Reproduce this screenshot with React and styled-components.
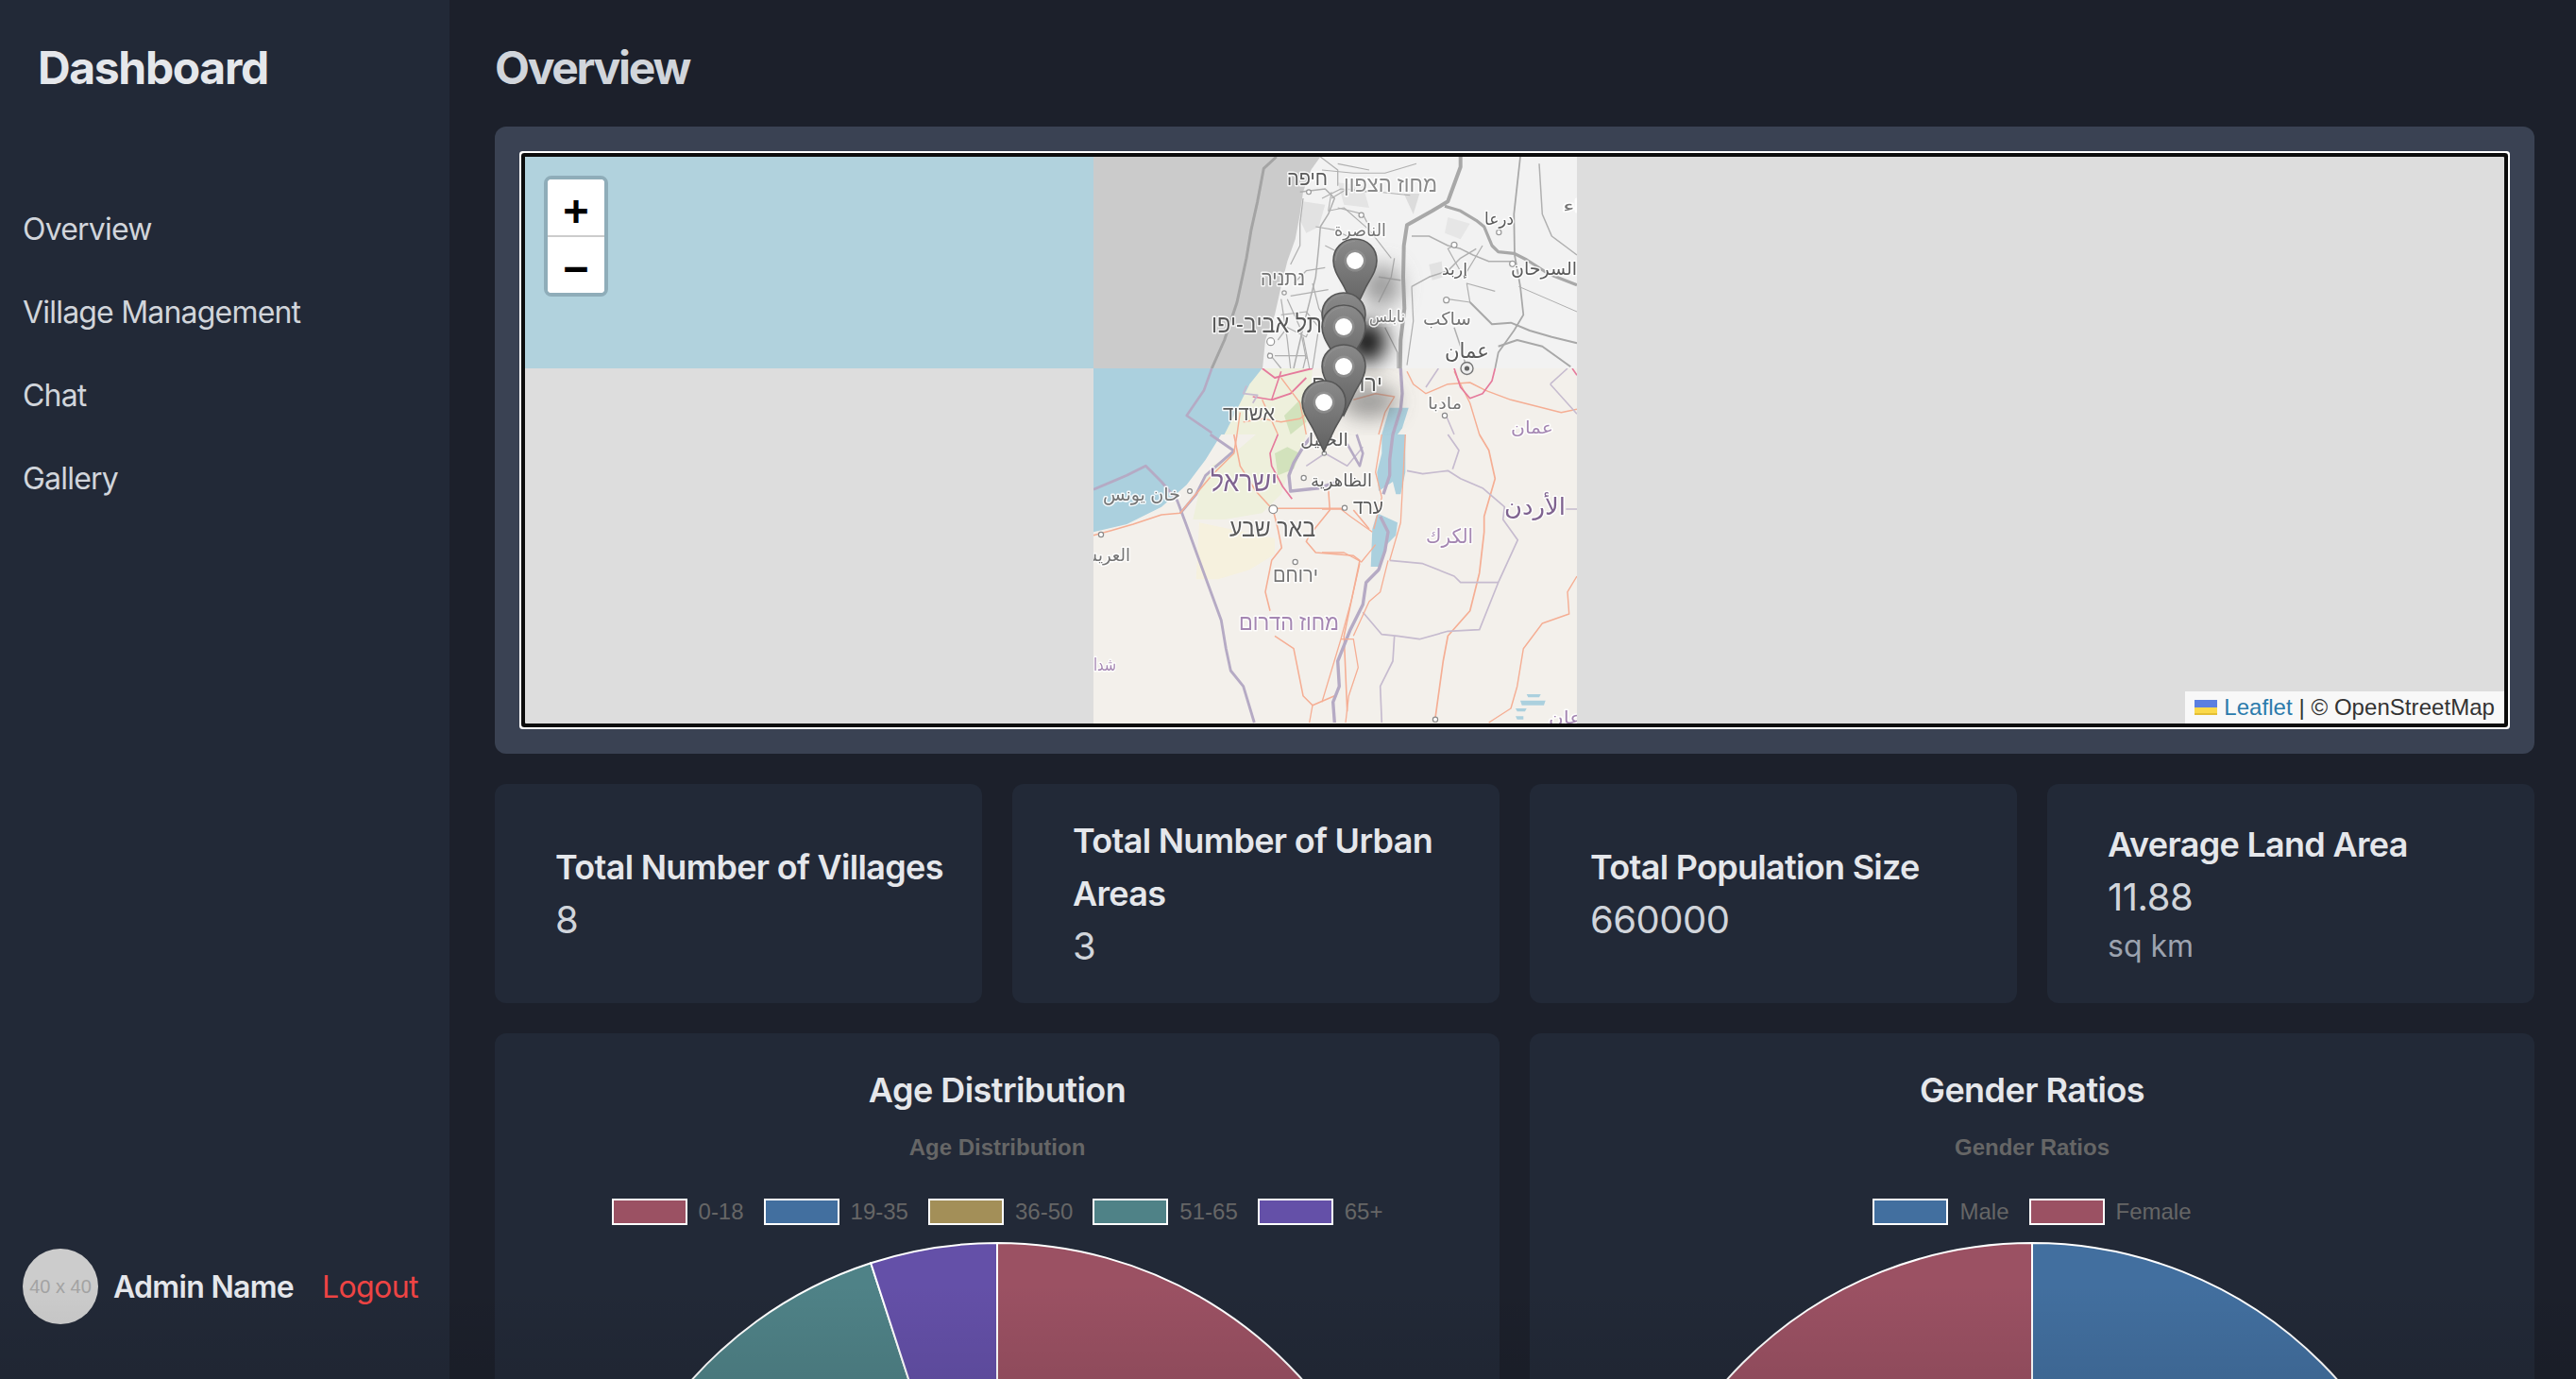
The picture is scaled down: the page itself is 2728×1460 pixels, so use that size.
import React from 'react';
import styled, { createGlobalStyle } from 'styled-components';

const Global = createGlobalStyle`
  html, body { margin: 0; padding: 0; height: 100%; overflow: hidden; background: #1c202b; }
  * { box-sizing: border-box; }
  body { font-family: Inter, "Noto Sans", sans-serif; }
`;

const Shell = styled.div`display: flex; width: 2728px; height: 1460px; overflow: hidden; position: relative;`;
const Sidebar = styled.aside`
  width: 476px; flex: none; background: #222937; display: flex; flex-direction: column; padding: 0 24px 58px;
`;
const Brand = styled.h1`margin: 40px 0 0 16px; font-size: 48px; line-height: 64px; font-weight: 700; letter-spacing: -1.35px; color: #e5e7eb;`;
const Nav = styled.nav`margin-top: 115px; display: flex; flex-direction: column; gap: 40px; flex: 1;`;
const NavItem = styled.a`font-size: 32px; line-height: 48px; letter-spacing: -.8px; color: #d1d5db;`;
const UserRow = styled.div`display: flex; align-items: center; white-space: nowrap;`;
const Avatar = styled.div`
  width: 80px; height: 80px; flex: none; border-radius: 50%; background: #ccc; color: #a3a3a3;
  display: flex; align-items: center; justify-content: center;
  font: 20px "Liberation Sans", sans-serif;
`;
const UserName = styled.span`margin-left: 16px; font-size: 32px; font-weight: 600; letter-spacing: -.7px; color: #e5e7eb;`;
const Logout = styled.a`margin-left: 30px; font-size: 32px; letter-spacing: -.6px; color: #ef4444;`;

const Main = styled.main`flex: 1; padding: 40px 44px 0 48px; min-width: 0; background: #1c202b;`;
const PageTitle = styled.h2`margin: 0 0 30px; font-size: 48px; line-height: 64px; font-weight: 700; letter-spacing: -2.3px; color: #d1d5db;`;
const MapPanel = styled.section`background: #3a4253; border-radius: 12px; padding: 32px;`;
const MapFrame = styled.div`
  position: relative; height: 600px; background: #ddd; border-radius: 1px;
  box-shadow: 0 0 0 4px #0c0c0c, 0 0 0 6px #fff;
`;
const MapArt = styled.svg`display: block; width: 100%; height: 100%;`;
const ZoomBox = styled.div`
  position: absolute; left: 20px; top: 20px; width: 68px; border: 4px solid #8fadb9; border-radius: 8px;
  background: #fff; overflow: hidden;
`;
const ZoomBtn = styled.div`
  height: ${p => p.$h}px; padding-top: 5px; display: flex; align-items: center; justify-content: center; background: #fff; color: #000;
  font: bold 44px "DejaVu Sans Mono", "Liberation Mono", monospace;
  border-bottom: ${p => (p.$sep ? '2px solid #ccc' : 'none')};
`;
const Attribution = styled.div`
  position: absolute; right: 0; bottom: 0; height: 34px; padding: 0 10px; display: flex; align-items: center;
  background: rgba(255,255,255,.8); color: #333; white-space: pre; letter-spacing: .05px;
  font: 24px/34px "Liberation Sans", Arial, sans-serif;
`;
const AttrLink = styled.a`color: #2b7bac;`;
const Flag = styled.svg`width: 24px; height: 16px; margin-right: 7px; flex: none;`;

const Stats = styled.div`display: grid; grid-template-columns: repeat(4, 1fr); gap: 32px; margin-top: 32px;`;
const StatCard = styled.div`
  height: 232px; background: #222937; border-radius: 12px; padding: 32px 32px 32px 64px;
  display: flex; flex-direction: column; justify-content: center;
`;
const StatLabel = styled.div`font-size: 36px; line-height: 56px; font-weight: 600; letter-spacing: -.7px; color: #e5e7eb;`;
const StatValue = styled.div`font-size: 40px; line-height: 56px; letter-spacing: -.5px; color: #d1d5db;`;
const StatUnit = styled.div`font-size: 32px; line-height: 48px; color: #9ca3af;`;

const Charts = styled.div`display: grid; grid-template-columns: repeat(2, 1fr); gap: 32px; margin-top: 32px;`;
const ChartCard = styled.div`background: #222937; border-radius: 12px; padding: 32px; height: 1120px;`;
const ChartHeading = styled.div`font-size: 36px; line-height: 56px; font-weight: 600; letter-spacing: -.55px; color: #e5e7eb; text-align: center;`;
const CanvasTitle = styled.div`margin-top: 16px; font: bold 24px/34px "Liberation Sans", Arial, sans-serif; color: #666; text-align: center;`;
const Legend = styled.div`margin-top: 37px; display: flex; justify-content: center; gap: 21px;`;
const LegendItem = styled.div`display: flex; align-items: center; gap: 12px; font: 24px/28px "Liberation Sans", Arial, sans-serif; color: #666;`;
const Swatch = styled.span`width: 80px; height: 28px; border: 2px solid #fff; background: ${p => p.$c};`;
const PieBox = styled.svg`display: block; margin: 17px auto 0; width: 870px; height: 870px;`;
const BottomFade = styled.div`
  position: absolute; left: 0; right: 0; bottom: 0; height: 100px; pointer-events: none;
  background: linear-gradient(rgba(0,0,0,0), rgba(0,0,0,.08));
`;

const Z = { a: [1150, 160], b: [1400, 160], c: [1150, 460], d: [1400, 460] };
const P = (z, s) => s.trim().split(/\s+/).map(p => {
  const [x, y] = p.split(',').map(Number);
  return `${(Z[z][0] + x / 3).toFixed(1)},${(Z[z][1] + y / 3).toFixed(1)}`;
}).join(' ');

const GG = '#b0b0b0', GD = '#a8a8a8';
const greyLines = [
  ['a', '#a4a4a4', 2.4, '605,18 565,55 545,160 525,250 510,340 480,480 440,600 400,690'],
  ['a', GG, 1.2, '680,130 760,120 790,150 770,200 745,240 740,300 730,400 710,480 690,560 660,690'],
  ['a', GG, 1, '650,360 680,300 680,230 690,150'],
  ['a', GG, 1, '800,180 880,200 900,240'],
  ['a', GG, 1, '730,240 790,250 850,280'],
  ['a', GG, 1, '620,470 640,600 650,690'],
  ['a', GG, 1, '650,460 770,440'],
  ['a', GG, 1, '610,600 640,560 700,590 720,540'],
  ['a', GG, 1, '600,650 700,650 690,690'],
  ['a', GG, 1, '720,420 740,500 760,530'],
  ['a', GG, 1, '690,590 710,690'],
  ['a', GG, 1, '745,18 800,60 800,110'],
  ['a', GG, 1, '800,40 900,60'],
  ['a', GG, 1, '620,520 700,510 740,560 720,690'],
  ['a', GG, 1, '580,640 620,690'],
  ['a', GG, 1, '780,150 830,120 900,130'],
  ['a', GG, 1, '660,420 700,380 760,370'],
  ['a', GG, 1, '640,470 680,560 700,660'],
  ['a', GG, 1, '760,300 800,320 830,300'],
  ['b', GD, 3.2, '440,18 440,50 400,160 350,190 270,235 260,300 258,400 262,500 250,600 248,690'],
  ['b', GD, 2.6, '390,175 440,190 490,220 515,240 540,300 560,320 610,325 650,345 720,390 810,425'],
  ['b', GD, 1.4, '630,18 610,200 612,330 630,430 640,520 610,570 560,640 550,690'],
  ['b', GG, 1.2, '690,40 700,200 730,270 770,300 810,330'],
  ['b', GG, 1.2, '285,270 340,270 400,300 440,310 480,330 530,350 600,350'],
  ['b', GG, 1.2, '285,430 340,400 400,380 440,340 490,310'],
  ['b', GG, 1, '285,430 290,540 270,680'],
  ['b', GD, 1.6, '470,480 540,550 600,545 660,570 730,590 810,610'],
  ['b', GD, 1.6, '560,620 620,600 700,620 790,685'],
  ['b', GG, .8, '625,430 810,510'],
  ['b', GG, 1, '420,300 400,310 450,400 510,300'],
  ['b', GG, 1.2, '420,560 440,620 460,690'],
  ['b', GG, 1, '400,470 470,480 460,420 550,445'],
  ['b', GG, .9, '0,60 100,70 200,70 300,40'],
  ['b', GG, .9, '0,150 60,120 180,130 280,140'],
  ['b', GG, .9, '30,130 20,190 70,180 150,250 220,340'],
  ['b', GG, 1.2, '180,400 250,410'],
  ['b', GG, 1, '230,340 220,400 180,480'],
  ['b', GG, 1, '200,560 240,640 240,690'],
];
const colorBorder = '#b5aac4', thinP = '#c6bbcf', road = '#f5ae94', pink = '#e57a9c';
const colorLines = [
  ['a', colorBorder, 2, '400,690 375,760 320,840 400,895'],
  ['a', pink, 1.4, '560,690 600,720 640,710 720,690'],
  ['a', pink, 1.4, '590,790 650,770 700,720'],
  ['a', pink, 1.2, '530,780 590,790 620,700'],
  ['a', road, 1.1, '500,860 560,850 620,860 680,850 720,820'],
  ['a', road, 1.1, '490,830 480,900'],
  ['a', road, 1.1, '560,790 610,900'],
  ['a', thinP, 1.4, '510,745 500,770 545,775 530,800'],
  ['a', road, 1, '620,720 680,800 700,900'],
  ['c', colorBorder, 2.2, '395,0 470,52 380,130 350,190 300,250'],
  ['c', colorBorder, 2.2, '24,175 130,130 190,100 240,150 290,210 320,290 360,400 430,590 445,680 460,750 500,800 535,915'],
  ['c', road, 1.2, '24,320 80,305 150,285 240,255 300,250 340,200 400,130 470,60 480,0'],
  ['c', road, 1.2, '595,240 540,180 490,100 470,0'],
  ['c', pink, 1.3, '655,205 625,165 590,100 585,60 610,0'],
  ['c', road, 1.2, '595,240 610,300 622,360 590,400 570,500 585,560'],
  ['c', road, 1.2, '600,640 660,680 690,830 720,860 790,830'],
  ['c', road, 1.2, '600,235 700,235 820,235'],
  ['c', road, 1.2, '850,240 900,300'],
  ['c', road, 1.2, '770,170 775,240 710,320 700,340 730,375 850,385 870,400 820,640 830,880'],
  ['c', road, 1, '720,860 710,915'],
  ['c', colorBorder, 2.6, '720,0 690,40 660,90 645,130 650,180 740,170 800,150'],
  ['c', thinP, 1.2, '700,100 760,60 830,100 880,40'],
  ['c', colorBorder, 2, '860,0 880,60 870,100 830,30'],
  ['d', colorBorder, 2.6, '225,0 215,80 215,130 195,190'],
  ['d', colorBorder, 2.6, '185,260 210,310 200,370 180,430 140,470 130,540 90,620 50,720 55,800 35,850 40,915'],
  ['d', road, 1.3, '500,0 530,50 550,140 515,260 515,310 500,440 470,560 400,640 385,720 360,900'],
  ['d', thinP, 1.3, '270,115 320,125 400,115 440,140 510,170 580,230 575,270 622,335 560,470 500,620 400,625 310,650 240,640 190,635 130,565'],
  ['d', thinP, 1.3, '215,400 320,410 420,450 440,470 560,470'],
  ['d', thinP, 1.3, '230,640 225,720 185,800 190,915'],
  ['d', thinP, 1.3, '415,110 435,50 400,0'],
  ['d', thinP, 1.2, '775,237 810,237'],
  ['d', road, 1.1, '810,450 780,500 785,570 700,600 640,680 620,800 600,870 530,915'],
  ['d', road, 1, '60,650 100,650 115,740 85,830 75,915'],
  ['d', road, 1, '120,410 95,520 60,650 0,850'],
  ['d', road, 1, '210,400 185,500 150,530 100,640'],
  ['d', road, 1, '0,375 70,375 125,405 170,350'],
  ['d', road, 1, '265,0 250,280 215,400'],
  ['d', road, 1, '0,237 60,237 90,260 160,310'],
  ['d', road, 1, '190,0 170,120 190,200 165,300'],
  ['b', colorBorder, 2.6, '250,690 255,770 250,820 225,900'],
  ['b', road, 1.1, '270,700 290,740 330,770 400,740 470,735 520,760 600,790 680,810 760,830 810,820'],
  ['b', road, 1.1, '420,700 470,800 500,900'],
  ['b', pink, 1.3, '420,690 440,750 470,785 510,770 540,730 550,690'],
  ['b', thinP, 1.2, '330,750 370,690'],
  ['b', thinP, 1.2, '725,740 780,690'],
  ['b', thinP, 1.2, '725,740 810,835'],
  ['b', pink, 1.2, '795,690 810,712'],
  ['b', thinP, 1.2, '390,830 420,900'],
  ['b', road, 1.1, '100,790 170,770 230,780 200,830 180,900'],
];

const waterFill = '#abd0de';
const colorAreas = [
  ['c', '#eef0dc', '400,100 470,60 540,0 700,0 680,60 640,130 620,190 560,250 440,270 340,270 360,180'],
  ['a', '#eef0dc', '520,740 560,690 720,690 700,900 440,900'],
  ['c', '#f6f1de', '360,280 600,330 600,380 520,430 420,460 350,460'],
  ['c', '#d2e2bc', '600,60 640,40 680,60 660,110 610,130'],
  ['a', '#d2e2bc', '630,840 680,790 700,860 650,900'],
  ['d', waterFill, '190,0 265,0 265,120 250,190 235,190 225,150 180,180 175,120 190,60'],
  ['d', waterFill, '175,250 240,280 235,320 205,350 185,420 155,420 160,300'],
  ['b', waterFill, '215,815 275,815 255,880 240,900 190,900'],
  ['d', waterFill, '630,845 710,845 705,860 635,860'],
  ['d', waterFill, '650,825 695,825 690,835 655,835'],
  ['d', waterFill, '615,870 650,870 645,880 620,880'],
  ['d', waterFill, '615,895 640,895 640,905 620,905'],
];
const greyAreas = [
  ['a', '#e2e2e2', '690,160 760,170 740,240 700,260 680,220'],
  ['b', '#dcdcdc', '260,135 310,135 290,200'],
  ['b', '#e2e2e2', '340,360 380,350 385,400 350,410'],
  ['a', '#e4e4e4', '800,100 880,110 900,180 820,170'],
  ['b', '#e6e6e6', '400,210 470,230 440,280 390,260'],
];
const nodes = [
  ['a', 708, 130, 2.4], ['a', 875, 203, 2.6], ['a', 630, 450, 2.2], ['a', 587, 605, 4], ['a', 585, 650, 2.6],
  ['b', 420, 298, 3], ['b', 395, 473, 3], ['b', 562, 258, 2.6], ['b', 605, 358, 3], ['b', 390, 840, 2.6],
  ['c', 330, 180, 2.4], ['c', 48, 318, 2.6], ['c', 595, 238, 4.4], ['c', 665, 405, 2.6], ['c', 692, 138, 2.6],
  ['c', 822, 233, 2.6], ['c', 757, 60, 2.2], ['d', 360, 905, 2.6],
];

const dark = '#5a5a5a', mid = '#747474', purple = '#a486b2', purpleDark = '#7f6490';
const labels = [
  ['חיפה', 1363, 1406, 196, 22, dark], ['מחוז הצפון', 1423, 1522, 203, 23, '#8a8a8a'],
  ['الناصرة', 1413, 1468, 250, 18, mid], ['נתניה', 1335, 1382, 302, 21, mid],
  ['תל אביב-יפו', 1283, 1400, 352, 26, dark], ['درعا', 1572, 1603, 238, 18, dark],
  ['إربد', 1527, 1554, 291, 17, dark], ['ساكب', 1507, 1558, 344, 19, mid],
  ['السرحان', 1600, 1670, 291, 19, dark], ['نابلس', 1450, 1488, 341, 17, mid],
  ['عمان', 1530, 1577, 379, 22, dark], ['ירושלים', 1389, 1464, 414, 23, dark],
  ['مادبا', 1512, 1548, 433, 17, mid], ['عمان', 1600, 1645, 459, 18, purple],
  ['אשדוד', 1295, 1350, 445, 22, dark], ['الخليل', 1377, 1428, 472, 19, dark],
  ['ישראל', 1282, 1353, 520, 30, purpleDark], ['الظاهرية', 1388, 1453, 515, 18, dark],
  ['خان يونس', 1168, 1250, 530, 19, mid], ['ערד', 1433, 1465, 544, 21, dark],
  ['באר שבע', 1302, 1393, 568, 26, dark], ['العريش', 1140, 1197, 594, 18, mid],
  ['ירוחם', 1348, 1396, 616, 21, mid], ['מחוז הדרום', 1312, 1418, 667, 24, purple],
  ['الكرك', 1510, 1560, 575, 21, purple], ['الأردن', 1593, 1658, 545, 25, purpleDark],
  ['شدا', 1158, 1182, 710, 18, purple], ['عان', 1640, 1675, 766, 18, purple], ['اء', 1655, 1675, 224, 17, mid],
];

const pins = [[1411, 252], [1399, 309], [1399, 322], [1399, 364], [1378, 402]];

function MapDrawing() {
  return (
    <MapArt viewBox="556 166 2096 600" aria-label="map">
      <defs>
        <clipPath id="tTop"><rect x="1158" y="166" width="512" height="224" /></clipPath>
        <clipPath id="tBottom"><rect x="1158" y="390" width="512" height="376" /></clipPath>
        <filter id="soft" x="-2%" y="-2%" width="104%" height="104%"><feGaussianBlur stdDeviation="0.65" /></filter>
        <filter id="shade" x="-50%" y="-50%" width="200%" height="200%"><feGaussianBlur stdDeviation="11" /></filter>
        <linearGradient id="pinFill" x1="0" y1="0" x2="0" y2="1">
          <stop offset="0" stopColor="#8a8a8a" /><stop offset="1" stopColor="#616161" />
        </linearGradient>
      </defs>
      <rect x="556" y="166" width="602" height="224" fill="#b1d2dd" />
      <g clipPath="url(#tTop)">
        <rect x="1158" y="166" width="512" height="224" fill="#cbcbcb" />
        <g filter="url(#soft)">
          <polygon fill="#f2f2f2" points={`${P('a', '745,18 715,60 690,130 680,200 665,280 640,350 620,430 600,520 570,600 560,700')} 1680,400 1680,160 1398,160`} />
          {greyAreas.map(([z, c, s], i) => <polygon key={i} fill={c} points={P(z, s)} />)}
          {greyLines.map(([z, c, w, s], i) => <polyline key={i} fill="none" stroke={c} strokeWidth={w * 1.25} strokeLinejoin="round" points={P(z, s)} />)}
          {nodes.filter(n => n[0] < 'c' && n[2] < 690).map(([z, x, y, r], i) => (
            <circle key={i} cx={Z[z][0] + x / 3} cy={Z[z][1] + y / 3} r={r} fill="#fff" stroke="#9a9a9a" strokeWidth="1.2" />
          ))}
        </g>
      </g>
      <g clipPath="url(#tBottom)">
        <rect x="1158" y="390" width="512" height="376" fill="#f3f0eb" />
        <g filter="url(#soft)">
          <polygon fill={waterFill} points={`1150,380 1340,380 ${P('a', '560,690 530,740 490,830 440,900')} ${P('c', '430,0 380,80 320,160 240,230 130,285 24,310')} 1150,565`} />
          {colorAreas.map(([z, c, s], i) => <polygon key={i} fill={c} points={P(z, s)} />)}
          {colorLines.map(([z, c, w, s], i) => <polyline key={i} fill="none" stroke={c} strokeWidth={w * 1.3} strokeLinejoin="round" points={P(z, s)} />)}
          {nodes.filter(n => n[0] >= 'c' || n[2] >= 690).map(([z, x, y, r], i) => (
            <circle key={i} cx={Z[z][0] + x / 3} cy={Z[z][1] + y / 3} r={r} fill="#fff" stroke="#8a8a8a" strokeWidth="1.2" />
          ))}
        </g>
      </g>
      <circle cx="1553.5" cy="390" r="6.5" fill="#eee" stroke="#777" strokeWidth="1.4" />
      <circle cx="1553.5" cy="390" r="2.6" fill="#666" />
      <g clipPath="url(#tBottom)">
        <g filter="url(#shade)">
          <ellipse cx="1450" cy="425" rx="30" ry="18" fill="#666" opacity=".6" />
        </g>
      </g>
      <g filter="url(#shade)">
        <ellipse cx="1463" cy="303" rx="20" ry="22" fill="#8a8a8a" opacity=".85" />
        <ellipse cx="1448" cy="362" rx="20" ry="22" fill="#000" opacity=".95" />
      </g>
      <g filter="url(#soft)">
        {labels.map(([t, x0, x1, y, fs, c], i) => (
          <g key={i} clipPath={y > 395 ? 'url(#tBottom)' : 'url(#tTop)'}>
            <text
              x={(x0 + x1) / 2} y={y} textAnchor="middle" direction="rtl" fontSize={fs} fill={c}
              fontFamily='"Liberation Sans", "DejaVu Sans", sans-serif' textLength={x1 - x0} lengthAdjust="spacingAndGlyphs"
              stroke="#fff" strokeOpacity=".85" strokeWidth="3" paintOrder="stroke" strokeLinejoin="round"
            >{t}</text>
          </g>
        ))}
      </g>
      {pins.map(([x, y], i) => (
        <g key={i} transform={`translate(${x} ${y})`}>
          <path d="M24 1C11 1 1 11 1 24c0 10 6 18 11 27l12 25 12-25c5-9 11-17 11-27C47 11 37 1 24 1Z" fill="url(#pinFill)" stroke="#555" strokeWidth="1.6" />
          <path d="M24 3.500C12.500 3.500 3.500 12.500 3.500 24" fill="none" stroke="#999" strokeWidth="1" opacity=".6" />
          <circle cx="24" cy="24" r="11.500" fill="#9a9a9a" opacity=".55" />
          <circle cx="24" cy="24" r="9" fill="#fff" />
        </g>
      ))}
    </MapArt>
  );
}

const polar = (cx, cy, r, deg) => {
  const a = (deg - 90) * Math.PI / 180;
  return [cx + r * Math.cos(a), cy + r * Math.sin(a)];
};

function Pie({ slices }) {
  const total = slices.reduce((s, x) => s + x.v, 0);
  let start = 0;
  return (
    <PieBox viewBox="0 0 870 870">
      {slices.map((s, i) => {
        const end = start + (s.v / total) * 360;
        const [x0, y0] = polar(435, 435, 433, start);
        const [x1, y1] = polar(435, 435, 433, end);
        const large = end - start > 180 ? 1 : 0;
        const d = `M435 435L${x0} ${y0}A433 433 0 ${large} 1 ${x1} ${y1}Z`;
        start = end;
        return <path key={i} d={d} fill={s.c} stroke="#fff" strokeWidth="2" />;
      })}
    </PieBox>
  );
}

const RED = '#9b5163', BLUE = '#426f9f', GOLD = '#a38f58', TEAL = '#4f8287', VIOLET = '#6450a8';
const age = [
  { l: '0-18', v: 35, c: RED }, { l: '19-35', v: 30, c: BLUE }, { l: '36-50', v: 20, c: GOLD },
  { l: '51-65', v: 10, c: TEAL }, { l: '65+', v: 5, c: VIOLET },
];
const gender = [{ l: 'Male', v: 50, c: BLUE }, { l: 'Female', v: 50, c: RED }];

function ChartPanel({ title, slices }) {
  return (
    <ChartCard>
      <ChartHeading>{title}</ChartHeading>
      <CanvasTitle>{title}</CanvasTitle>
      <Legend>
        {slices.map(s => <LegendItem key={s.l}><Swatch $c={s.c} />{s.l}</LegendItem>)}
      </Legend>
      <Pie slices={slices} />
    </ChartCard>
  );
}

export default function App() {
  return (
    <Shell>
      <Global />
      <Sidebar>
        <Brand>Dashboard</Brand>
        <Nav>
          <NavItem>Overview</NavItem>
          <NavItem>Village Management</NavItem>
          <NavItem>Chat</NavItem>
          <NavItem>Gallery</NavItem>
        </Nav>
        <UserRow>
          <Avatar>40 x 40</Avatar>
          <UserName>Admin Name</UserName>
          <Logout>Logout</Logout>
        </UserRow>
      </Sidebar>
      <Main>
        <PageTitle>Overview</PageTitle>
        <MapPanel>
          <MapFrame>
            <MapDrawing />
            <ZoomBox>
              <ZoomBtn $h={61} $sep>+</ZoomBtn>
              <ZoomBtn $h={59}>−</ZoomBtn>
            </ZoomBox>
            <Attribution>
              <Flag viewBox="0 0 12 8"><rect width="12" height="4" fill="#5b7fe0" /><rect y="4" width="12" height="4" fill="#fbd94a" /><rect y="7" width="12" height="1" fill="#e3bf35" /></Flag>
              <AttrLink>Leaflet</AttrLink> | © OpenStreetMap
            </Attribution>
          </MapFrame>
        </MapPanel>
        <Stats>
          <StatCard><StatLabel>Total Number of Villages</StatLabel><StatValue>8</StatValue></StatCard>
          <StatCard><StatLabel>Total Number of Urban Areas</StatLabel><StatValue>3</StatValue></StatCard>
          <StatCard><StatLabel>Total Population Size</StatLabel><StatValue>660000</StatValue></StatCard>
          <StatCard><StatLabel>Average Land Area</StatLabel><StatValue>11.88</StatValue><StatUnit>sq km</StatUnit></StatCard>
        </Stats>
        <Charts>
          <ChartPanel title="Age Distribution" slices={age} />
          <ChartPanel title="Gender Ratios" slices={gender} />
        </Charts>
      </Main>
      <BottomFade />
    </Shell>
  );
}
